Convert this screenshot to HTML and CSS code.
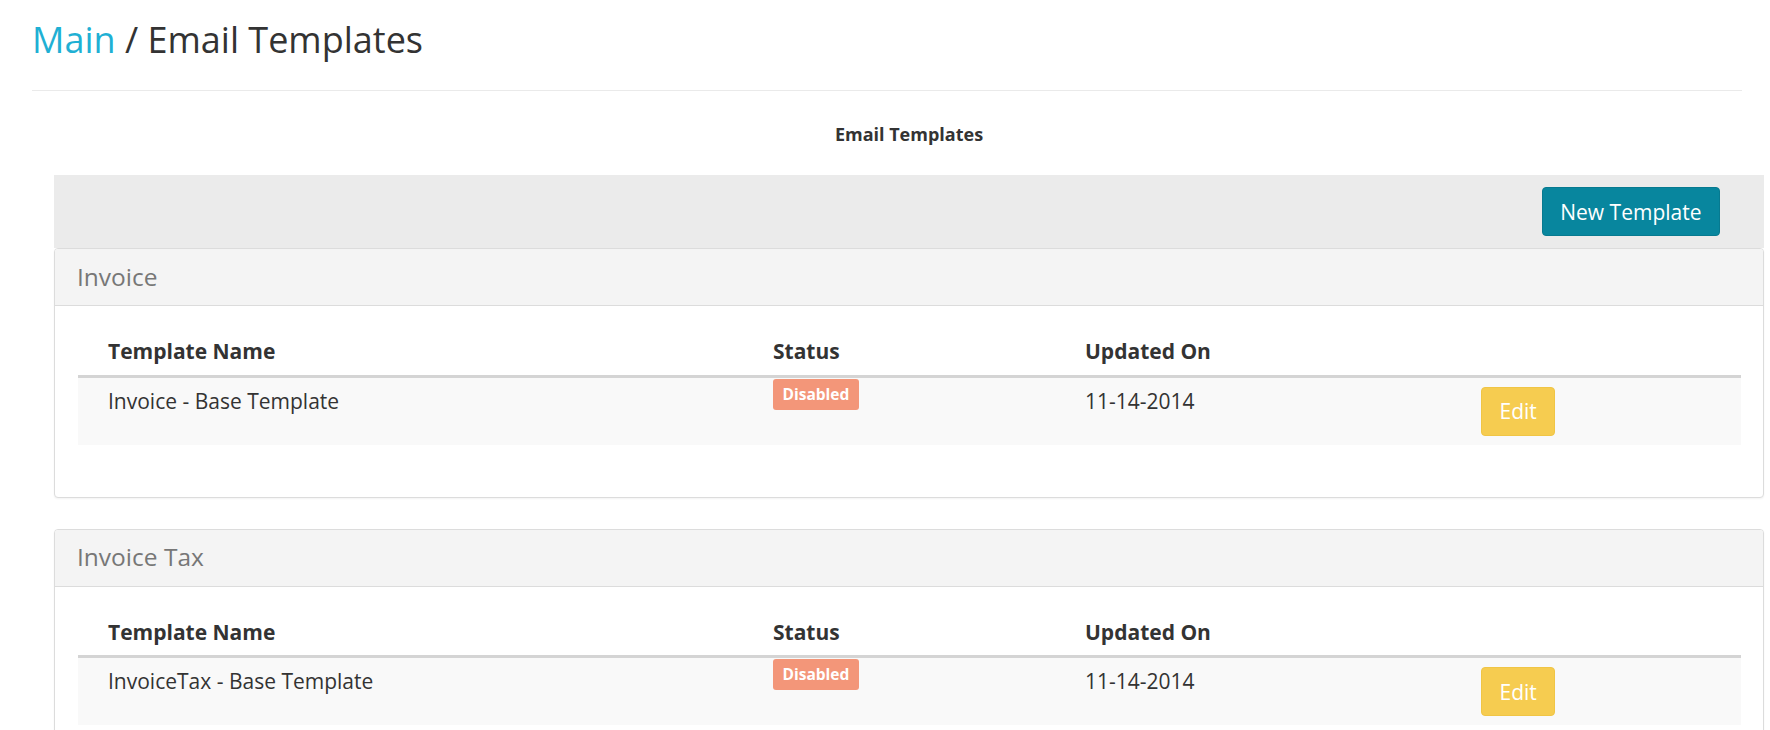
FILE: index.html
```html
<!DOCTYPE html>
<html lang="en">
<head>
<meta charset="utf-8">
<title>Email Templates</title>
<link rel="stylesheet" href="styles.css">
</head>
<body>
<div class="page">
  <h1 class="title"><a class="crumb" href="#">Main</a> / Email Templates</h1>
  <hr class="divider">
  <section class="panel">
    <h2 class="panel-heading">Email Templates</h2>
    <div class="toolbar">
      <button class="btn btn-new" type="button">New Template</button>
    </div>

    <div class="card">
      <div class="card-header">Invoice</div>
      <div class="card-body">
        <table class="tpl-table">
          <colgroup>
            <col class="c-name"><col class="c-status"><col class="c-date"><col class="c-action">
          </colgroup>
          <thead>
            <tr><th>Template Name</th><th>Status</th><th>Updated On</th><th></th></tr>
          </thead>
          <tbody>
            <tr>
              <td>Invoice - Base Template</td>
              <td class="status"><span class="label">Disabled</span></td>
              <td>11-14-2014</td>
              <td><button class="btn btn-edit" type="button">Edit</button></td>
            </tr>
          </tbody>
        </table>
      </div>
    </div>

    <div class="card">
      <div class="card-header">Invoice Tax</div>
      <div class="card-body">
        <table class="tpl-table">
          <colgroup>
            <col class="c-name"><col class="c-status"><col class="c-date"><col class="c-action">
          </colgroup>
          <thead>
            <tr><th>Template Name</th><th>Status</th><th>Updated On</th><th></th></tr>
          </thead>
          <tbody>
            <tr>
              <td>InvoiceTax - Base Template</td>
              <td class="status"><span class="label">Disabled</span></td>
              <td>11-14-2014</td>
              <td><button class="btn btn-edit" type="button">Edit</button></td>
            </tr>
          </tbody>
        </table>
      </div>
    </div>
  </section>
</div>
</body>
</html>
```

FILE: styles.css
```css
* { box-sizing: border-box; }

html, body {
  margin: 0;
  background: #fff;
}

body {
  font-family: "Open Sans", "DejaVu Sans", sans-serif;
  color: #333;
  font-size: 21px;
}

.page {
  padding-left: 32px;
  width: 1742px;
}

.title {
  margin: 0;
  padding-top: 18px;
  font-size: 36px;
  font-weight: 400;
  line-height: 43px;
  color: #333;
}

.crumb {
  color: #1fb0d4;
  text-decoration: none;
}

.divider {
  margin: 29px 0 0;
  border: 0;
  border-top: 1px solid #eaeaea;
  height: 0;
  width: 1710px;
}

.panel {
  margin-left: 22px;
  width: 1710px;
}

.panel-heading {
  margin: 30px 0 28px;
  font-size: 18px;
  font-weight: 700;
  line-height: 26px;
  text-align: center;
  color: #333;
}

.toolbar {
  display: flex;
  justify-content: flex-end;
  background: #ebebeb;
  padding: 12px 44px;
}

.btn {
  font-family: "Open Sans", "DejaVu Sans", sans-serif;
  font-size: 21px;
  line-height: 28px;
  color: #fff;
  border-radius: 4px;
  cursor: pointer;
}

.btn-new {
  background: #08869e;
  border: 1px solid #077a90;
  padding: 9.5px 17.5px;
}

.btn-edit {
  background: #f6cc50;
  border: 1px solid #f0c545;
  padding: 9.5px 17.5px;
}

.card {
  border: 1px solid #dcdcdc;
  border-radius: 4px;
  background: #fff;
  box-shadow: 0 1px 2px rgba(0, 0, 0, 0.05);
  margin-bottom: 31px;
}

.card-header {
  display: flex;
  align-items: center;
  height: 57px;
  padding: 0 22px;
  background: #f4f4f4;
  border-bottom: 1px solid #dcdcdc;
  border-radius: 3px 3px 0 0;
  font-size: 24.5px;
  line-height: 1.1;
  color: #777;
}

.card-body {
  padding: 22px 22px 52px 23px;
}

.tpl-table {
  width: 100%;
  border-collapse: collapse;
  table-layout: fixed;
}

.c-name { width: 665px; }
.c-status { width: 312px; }
.c-date { width: 396px; }

.tpl-table th {
  text-align: left;
  font-weight: 700;
  line-height: 28.6px;
  padding: 9px 30px;
  border-bottom: 3px solid #d4d4d4;
  vertical-align: bottom;
}

.tpl-table td {
  line-height: 28.6px;
  padding: 9px 30px;
  background: #f9f9f9;
  vertical-align: top;
}

.tpl-table td.status {
  padding-top: 1px;
}

.label {
  display: inline-block;
  vertical-align: top;
  background: #f39679;
  color: #fff;
  font-size: 15.5px;
  font-weight: 700;
  line-height: 15px;
  padding: 8px 9.5px;
  border-radius: 3px;
}
```
